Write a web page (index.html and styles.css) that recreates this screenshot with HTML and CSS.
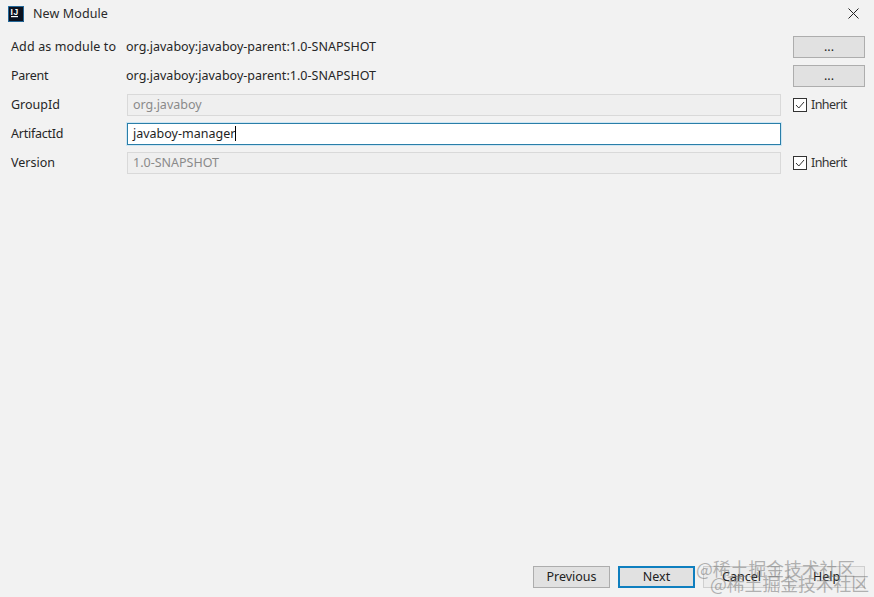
FILE: index.html
```html
<!DOCTYPE html>
<html lang="en">
<head>
<meta charset="utf-8">
<title>New Module</title>
<link rel="stylesheet" href="styles.css">
</head>
<body>
<div class="dialog">
  <header class="titlebar">
    <svg class="logo" width="16" height="16" viewBox="0 0 16 16"><rect width="16" height="16" fill="#0b1220"/><rect x=".4" y=".4" width="15.200" height="15.200" fill="none" stroke="#2b7fb8" stroke-width="0.8"/><text class="logo-text" x="2.500" y="8.500">IJ</text><rect x="3" y="10" width="7" height="1.200" fill="#fff"/></svg>
    <span class="title">New Module</span>
    <svg class="close" width="11" height="11" viewBox="0 0 11 11"><path d="M.5.500l10 10M10.500.500l-10 10" stroke="#222" stroke-width="1" fill="none"/></svg>
  </header>
  <main class="form">
    <label class="label wider">Add as module to</label>
    <div class="value">org.javaboy:javaboy-parent:1.0-SNAPSHOT</div>
    <button class="btn">...</button>

    <label class="label tight">Parent</label>
    <div class="value">org.javaboy:javaboy-parent:1.0-SNAPSHOT</div>
    <button class="btn">...</button>

    <label class="label">GroupId</label>
    <div class="input disabled">org.javaboy</div>
    <div class="inherit"><svg class="check" width="14" height="14" viewBox="0 0 14 14"><rect x=".5" y=".5" width="13" height="13" fill="#fff" stroke="#333"/><path d="M3 7l2.800 3L11 4" fill="none" stroke="#333" stroke-width="1"/></svg><span>Inherit</span></div>

    <label class="label tight">ArtifactId</label>
    <div class="input active">javaboy-manager<span class="caret"></span></div>
    <div></div>

    <label class="label">Version</label>
    <div class="input disabled">1.0-SNAPSHOT</div>
    <div class="inherit"><svg class="check" width="14" height="14" viewBox="0 0 14 14"><rect x=".5" y=".5" width="13" height="13" fill="#fff" stroke="#333"/><path d="M3 7l2.800 3L11 4" fill="none" stroke="#333" stroke-width="1"/></svg><span>Inherit</span></div>
  </main>
  <footer class="footer">
    <button class="btn wide">Previous</button>
    <button class="btn wide primary">Next</button>
    <button class="btn wide faint">Cancel</button>
    <button class="btn wide faint">Help</button>
  </footer>
  <div class="wm wm-one">@稀土掘金技术社区</div>
  <div class="wm wm-two">@稀土掘金技术社区</div>
</div>
</body>
</html>
```

FILE: styles.css
```css
* { box-sizing: border-box; }
html, body { margin: 0; height: 100%; }
body {
  background: #f2f2f2;
  color: #1f1f1f;
  font-family: "Noto Sans", "Open Sans", sans-serif;
  font-size: 12.5px;
  overflow: hidden;
}
.dialog {
  position: relative;
  width: 874px;
  height: 597px;
  display: flex;
  flex-direction: column;
}
.titlebar {
  height: 36px;
  flex: none;
  display: flex;
  align-items: flex-start;
  padding: 6px 15px 0 8px;
}
.logo { flex: none; }
.logo-text {
  font-family: "Liberation Sans", sans-serif;
  font-size: 8.5px;
  font-weight: 700;
  fill: #fff;
  letter-spacing: 0.6px;
}
.title { margin-left: 9px; line-height: 16px; color: #2a2a2a; letter-spacing: 0.1px; }
.close { margin-left: auto; margin-top: 2px; }
.form {
  display: grid;
  grid-template-columns: 116px 654px 84px;
  grid-auto-rows: 22px;
  row-gap: 7px;
  padding-left: 11px;
  align-items: center;
}
.form > :nth-child(3n) { margin-left: 12px; width: 72px; }
.label { line-height: 22px; color: #262626; }
.wider { letter-spacing: 0.13px; }
.tight { letter-spacing: -0.25px; }
.value { line-height: 22px; margin-left: -1px; color: #262626; letter-spacing: 0.02px; }
.input {
  height: 22px;
  line-height: 20px;
  padding-left: 5px;
  border: 1px solid #d9d9d9;
  background: #efefef;
}
.disabled { color: #8a8a8a; }
.active {
  background: #fff;
  border-color: #2a7ea8;
  box-shadow: 0 0 0 1px #cfe6f3;
  color: #1f1f1f;
}
.caret {
  display: inline-block;
  width: 1px;
  height: 15px;
  background: #000;
  vertical-align: -3px;
}
.btn {
  height: 22px;
  padding: 0;
  border: 1px solid #adadad;
  background: #e1e1e1;
  color: #222;
  font: inherit;
  line-height: 18px;
}
.inherit {
  display: flex;
  align-items: center;
  gap: 4px;
  color: #333;
  font-size: 12.5px;
  letter-spacing: -0.55px;
  line-height: 20px;
  margin-top: -1px;
}
.check { flex: none; }
.footer {
  margin-top: auto;
  display: flex;
  justify-content: flex-end;
  gap: 8px;
  padding: 0 9px 9px 0;
}
.wide { width: 77px; }
.primary { border: 2px solid #0f7fbf; }
.faint { background: #ececec; border-color: #cfcfcf; }
.wm {
  position: absolute;
  font-size: 17.8px;
  line-height: 20px;
  white-space: nowrap;
  color: rgba(110, 110, 110, 0.5);
  font-family: "Noto Sans CJK SC", sans-serif;
}
.wm-one { left: 696px; top: 558px; }
.wm-two { left: 710px; top: 573px; }
```
